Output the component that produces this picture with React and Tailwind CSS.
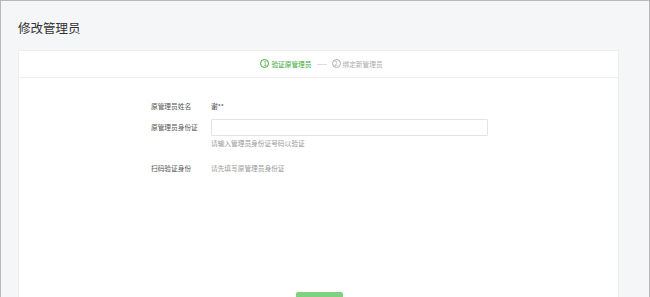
export default function App() {
    const font = { fontFamily: '"Noto Sans CJK SC", "Liberation Sans", sans-serif' }

    return (
        <div className="w-[650px] h-[297px] overflow-hidden bg-[#f5f6f8] border-t border-l border-r border-[#b8b8b8] text-[#333]" style={font}>
            <div className="px-[17px]">
                <h1 className="h-[49px] pt-[18px] text-[12.5px] leading-[18px] text-[#333]">修改管理员</h1>

                <div className="w-[601px] h-[260px] bg-white border border-[#eeeeee]">
                    <div className="h-[27px] border-b border-[#eeeeee] flex items-center justify-center gap-[5px] pl-[6px] text-[6.7px]">
                        <div className="flex items-center gap-[2px] text-[#3aa93a]">
                            <span className="w-[9px] h-[9px] rounded-full border border-[#3aa93a] flex items-center justify-center text-[6px] leading-none">1</span>
                            <span>验证原管理员</span>
                        </div>
                        <div className="w-[10px] h-px bg-[#dddddd]"></div>
                        <div className="flex items-center gap-[2px] text-[#aaaaaa]">
                            <span className="w-[9px] h-[9px] rounded-full border border-[#aaaaaa] flex items-center justify-center text-[6px] leading-none">2</span>
                            <span>绑定新管理员</span>
                        </div>
                    </div>

                    <div className="pl-[132px] pt-[21px] text-[6.7px] leading-[10px]">
                        <div className="flex items-center h-[14px]">
                            <span className="w-[60px] text-[#555]">原管理员姓名</span>
                            <span className="text-[#444]">谢**</span>
                        </div>
                        <div className="flex mt-[6px]">
                            <span className="w-[60px] pt-[3px] text-[#555]">原管理员身份证</span>
                            <div>
                                <div className="w-[277px] h-[17px] border border-[#e3e3e3] rounded-[1px]"></div>
                                <div className="mt-[2px] text-[#999]">请输入管理员身份证号码以验证</div>
                            </div>
                        </div>
                        <div className="flex items-center h-[14px] mt-[13px]">
                            <span className="w-[60px] text-[#555]">扫码验证身份</span>
                            <span className="text-[#999]">请先填写原管理员身份证</span>
                        </div>
                        <div className="mt-[117px] ml-[145px] w-[47px] h-[20px] bg-[#7fd07f] rounded-[2px]"></div>
                    </div>
                </div>
            </div>
        </div>
    )
}
